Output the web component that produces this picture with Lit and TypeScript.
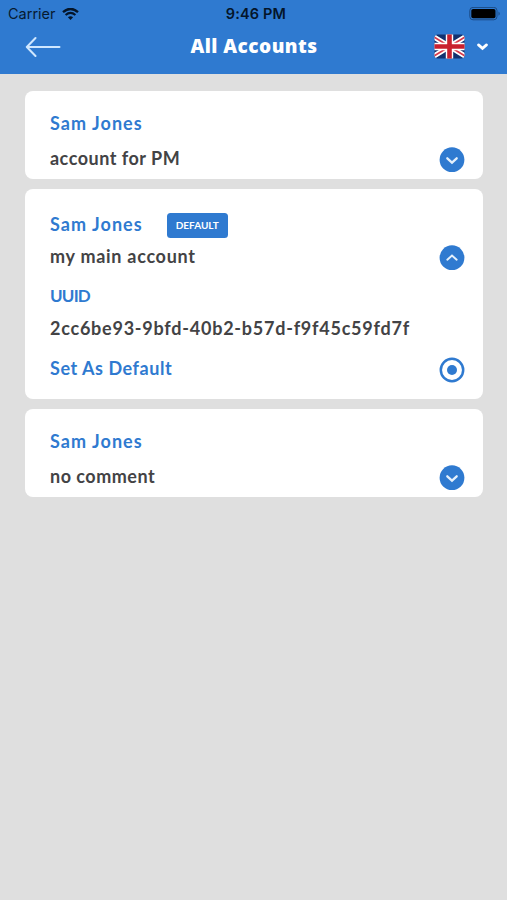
import { LitElement, html, css, svg, nothing } from "lit";
import { customElement, property } from "lit/decorators.js";

@customElement("round-icon")
class RoundIcon extends LitElement {
  @property() kind = "down";
  static styles = css`
    :host { display: block; width: 26px; height: 26px; flex: none; }
    svg { display: block; }
  `;
  render() {
    const glyph =
      this.kind === "radio"
        ? svg`<circle cx="13" cy="13" r="11.2" fill="#fff" stroke="#2f7ad0" stroke-width="2.5"/><circle cx="13" cy="13" r="5" fill="#2f7ad0"/>`
        : svg`<circle cx="13" cy="12.7" r="12.4" fill="#2f7ad0"/><path d=${
            this.kind === "up" ? "M8.3 14.7L13 10.6L17.7 14.7" : "M8.3 11.3L13 15.6L17.7 11.3"
          } fill="none" stroke="#e4f0fc" stroke-width=${this.kind === "up" ? 2 : 2.3} stroke-linecap="round"/>`;
    return html`<svg width="26" height="26" viewBox="0 0 26 26">${glyph}</svg>`;
  }
}

@customElement("account-card")
class AccountCard extends LitElement {
  @property() name = "";
  @property() comment = "";
  @property() uuid = "";
  @property({ type: Boolean, reflect: true }) open = false;
  static styles = css`
    :host {
      display: block; box-sizing: border-box; height: 88px; padding: 20px 18px 0 24.7px;
      background: #fff; border-radius: 8px; color: #434345;
      font: 700 18px/24px Lato, "Open Sans", sans-serif; white-space: nowrap;
    }
    :host([open]) { height: 210px; padding-top: 24px; }
    .row { display: flex; align-items: center; height: 24px; }
    .link { color: #2f7ad0; }
    .name { letter-spacing: 1.05px; }
    .comment { justify-content: space-between; height: 26px; margin-top: 12px; }
    .comment span { letter-spacing: 0.5px; margin-top: -4px; }
    :host([open]) .comment { margin-top: 8px; }
    :host([open]) .comment span { letter-spacing: 0.72px; margin-top: -5px; }
    :host([open]) .name { margin-top: -2px; }
    .badge {
      margin-left: 24px; width: 61px; height: 25px; border-radius: 3.5px; background: #2f7ad0;
      color: #fff; font-size: 10px; line-height: 24px; text-align: center; letter-spacing: 0;
    }
    .label { margin-top: 13px; font-size: 17px; letter-spacing: -0.8px; }
    .value { margin-top: 8px; letter-spacing: 0.76px; }
    .default { justify-content: space-between; height: 26px; margin-top: 17px; letter-spacing: 0.55px; }
    .default span { margin-top: -5px; }
  `;
  render() {
    return html`
      <div class="row link"><span class="name">${this.name}</span>${this.open ? html`<span class="badge">DEFAULT</span>` : nothing}</div>
      <div class="row comment"><span>${this.comment}</span><round-icon kind=${this.open ? "up" : "down"}></round-icon></div>
      ${this.open
        ? html`<div class="row link label">UUID</div>
            <div class="row value">${this.uuid}</div>
            <div class="row link default"><span>Set As Default</span><round-icon kind="radio"></round-icon></div>`
        : nothing}
    `;
  }
}

@customElement("app-root")
class AppRoot extends LitElement {
  static styles = css`
    :host { display: block; height: 900px; background: #dfdfdf; overflow: hidden; }
    header { height: 74px; background: #2f7ad0; }
    svg { display: block; flex: none; }
    .status, .nav { display: grid; grid-template-columns: 1fr auto 1fr; align-items: center; }
    .status {
      height: 28px; padding: 0 6px 0 8px; color: #071a30;
      font: 400 14.5px/28px Inter, "Liberation Sans", sans-serif;
    }
    .carrier { display: flex; align-items: center; gap: 6px; letter-spacing: 0; }
    .time { font-weight: 600; color: #04152a; letter-spacing: 0.15px; padding-left: 3px; }
    .battery { justify-self: end; }
    .nav { height: 36px; padding: 0 18px 0 25px; }
    .title { margin: -1px 6px 0 0; color: #fff; font: 800 19px/36px "Open Sans", sans-serif; letter-spacing: 0.48px; }
    .lang { display: flex; align-items: center; gap: 11px; justify-self: end; }
    main { display: flex; flex-direction: column; gap: 10px; padding: 17px 24.5px 0 25.3px; }
  `;
  render() {
    return html`
      <header>
        <div class="status">
          <div class="carrier">Carrier
            <svg width="17" height="13" viewBox="0 0 17 13" fill="none" stroke="#04152a">
              <path d="M1 4.1Q8.5 -2.3 16 4.1" stroke-width="2.4"/>
              <path d="M3.6 7Q8.5 2.8 13.4 7" stroke-width="2.2"/>
              <path d="M5.9 9.3Q8.5 7.1 11.1 9.3L8.5 11.9Z" fill="#04152a" stroke="none"/>
            </svg>
          </div>
          <div class="time">9:46 PM</div>
          <svg class="battery" width="32" height="14" viewBox="0 0 32 14">
            <rect x=".8" y=".4" width="27.2" height="12.4" rx="3.2" fill="none" stroke="#1b4b85" stroke-width="1"/>
            <rect x="2.3" y="1.9" width="24.2" height="9.4" rx="1.8" fill="#000"/>
            <path d="M29.5 4.4Q32 6.6 29.5 8.8Z" fill="#1b4b85"/>
          </svg>
        </div>
        <div class="nav">
          <svg width="36" height="22" viewBox="0 0 36 22" fill="none" stroke="#cfe7ff" stroke-width="2" stroke-linecap="round" stroke-linejoin="round">
            <path d="M34.5 12H2M10.5 3L1.8 12L10.5 21"/>
          </svg>
          <h1 class="title">All Accounts</h1>
          <div class="lang">
            <svg width="31" height="25" viewBox="0 0 31 25">
              <defs><clipPath id="flag"><rect x=".5" y=".5" width="30" height="24" rx="3.5"/></clipPath></defs>
              <g clip-path="url(#flag)">
                <rect width="31" height="25" fill="#12316f"/>
                <path d="M0 3L31 22M31 3L0 22" stroke="#fff" stroke-width="5"/>
                <path d="M0 3L31 22M31 3L0 22" stroke="#d83a4c" stroke-width="1.8"/>
                <path d="M15.5 0V25M0 12.5H31" stroke="#fff" stroke-width="7.4"/>
                <path d="M15.5 0V25M0 12.5H31" stroke="#c9202f" stroke-width="4.6"/>
              </g>
            </svg>
            <svg width="13" height="9" viewBox="0 0 13 9" fill="none" stroke="#fff" stroke-width="2.8" stroke-linecap="round">
              <path d="M2.5 2.9L6.5 6.3L10.5 2.9"/>
            </svg>
          </div>
        </div>
      </header>
      <main>
        <account-card name="Sam Jones" comment="account for PM"></account-card>
        <account-card name="Sam Jones" comment="my main account" uuid="2cc6be93-9bfd-40b2-b57d-f9f45c59fd7f" open></account-card>
        <account-card name="Sam Jones" comment="no comment"></account-card>
      </main>
    `;
  }
}
